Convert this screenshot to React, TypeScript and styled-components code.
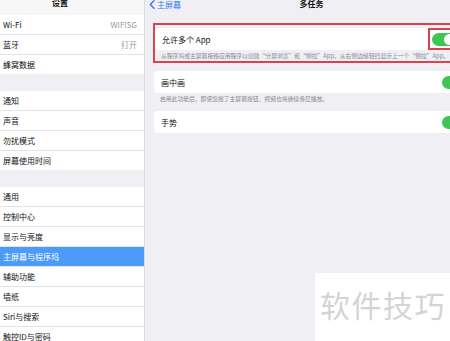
import styled, { createGlobalStyle } from "styled-components";

const GlobalStyle = createGlobalStyle`
  html, body {
    margin: 0;
    padding: 0;
    width: 450px;
    height: 341px;
    overflow: hidden;
    background: #efeff4;
    font-family: "Noto Sans CJK SC", "Noto Sans", sans-serif;
  }
`;

type Item = { label: string; value?: string; selected?: boolean };

const groups: Item[][] = [
  [
    { label: "Wi-Fi", value: "WIFISG" },
    { label: "蓝牙", value: "打开" },
    { label: "蜂窝数据" },
  ],
  [
    { label: "通知" },
    { label: "声音" },
    { label: "勿扰模式" },
    { label: "屏幕使用时间" },
  ],
  [
    { label: "通用" },
    { label: "控制中心" },
    { label: "显示与亮度" },
    { label: "主屏幕与程序坞", selected: true },
    { label: "辅助功能" },
    { label: "墙纸" },
    { label: "Siri与搜索" },
    { label: "触控ID与密码" },
  ],
];

const App: React.FC = () => {
  return (
    <>
      <GlobalStyle />
      <Screen>
        <Sidebar>
          <SideHeader>
            <HeaderTitle>设置</HeaderTitle>
          </SideHeader>
          {groups.map((group, gi) => (
            <Group key={gi}>
              {group.map((item) => (
                <Row key={item.label} $selected={item.selected}>
                  <span>{item.label}</span>
                  {item.value && <Value>{item.value}</Value>}
                </Row>
              ))}
            </Group>
          ))}
        </Sidebar>

        <Detail>
          <NavBar>
            <Back>
              <svg width="6" height="9" viewBox="0 0 6 9">
                <path d="M5 0.8 L1.3 4.5 L5 8.2" fill="none" stroke="#3478f6" strokeWidth="1.4" strokeLinecap="round" strokeLinejoin="round" />
              </svg>
              主屏幕
            </Back>
            <NavTitle>多任务</NavTitle>
          </NavBar>

          <Content>
            <Highlight>
              <Cell>
                <CellLabel>允许多个 App</CellLabel>
                <ToggleFrame>
                  <Toggle />
                </ToggleFrame>
              </Cell>
              <Footnote>从程序坞或主屏幕拖移应用程序以创建“分屏浏览”和“侧拉”App。从右侧边缘轻扫显示上一个“侧拉”App。</Footnote>
            </Highlight>

            <Section>
              <Cell>
                <CellLabel>画中画</CellLabel>
                <Toggle />
              </Cell>
              <Footnote>启用此功能后，即使您按了主屏幕按钮，视频也将继续叠层播放。</Footnote>
            </Section>

            <Section>
              <Cell>
                <CellLabel>手势</CellLabel>
                <Toggle />
              </Cell>
            </Section>
          </Content>

          <Watermark>软件技巧</Watermark>
        </Detail>
      </Screen>
    </>
  );
};

export default App;

const Screen = styled.div`
  display: flex;
  width: 450px;
  height: 341px;
  overflow: hidden;
`;

const Sidebar = styled.div`
  width: 144px;
  flex-shrink: 0;
  background: #efeff4;
  border-right: 1px solid #dcdce0;
  display: flex;
  flex-direction: column;
  gap: 17px;
  overflow: hidden;
`;

const SideHeader = styled.div`
  height: 15px;
  flex-shrink: 0;
  margin-bottom: -17px;
  background: #f7f7f8;
  display: flex;
  justify-content: center;
  align-items: flex-start;
  padding-right: 24px;
`;

const HeaderTitle = styled.div`
  font-size: 8px;
  font-weight: 600;
  line-height: 8px;
  margin-top: -1px;
  color: #111;
`;

const Group = styled.div`
  flex-shrink: 0;
  background: #fff;
  display: flex;
  flex-direction: column;
`;

const Row = styled.div<{ $selected?: boolean }>`
  height: 19px;
  flex-shrink: 0;
  border-bottom: 1px solid #e4e4e8;
  display: flex;
  align-items: center;
  justify-content: space-between;
  padding: 0 7px 0 3px;
  font-size: 8px;
  color: ${(p) => (p.$selected ? "#fff" : "#111")};
  background: ${(p) => (p.$selected ? "#4b9bf7" : "transparent")};

  &:last-child {
    border-bottom: none;
  }
`;

const Value = styled.span`
  color: #9a9aa0;
`;

const Detail = styled.div`
  position: relative;
  flex: 1;
  background: #efeff4;
  overflow: hidden;
`;

const NavBar = styled.div`
  position: relative;
  height: 15px;
  display: flex;
  align-items: flex-start;
  justify-content: center;
`;

const Back = styled.div`
  position: absolute;
  left: 4px;
  top: 0;
  display: flex;
  align-items: center;
  gap: 2px;
  color: #3478f6;
  font-size: 8px;
  line-height: 8px;
`;

const NavTitle = styled.div`
  font-size: 8px;
  font-weight: 600;
  line-height: 8px;
  margin-left: 28px;
  color: #111;
`;

const Content = styled.div`
  display: flex;
  flex-direction: column;
  gap: 7px;
  padding: 8px 0 0 8px;
  margin-right: -12px;
`;

const Section = styled.div`
  display: flex;
  flex-direction: column;
  margin-left: 1px;
`;

const Highlight = styled.div`
  display: flex;
  flex-direction: column;
  border: 2px solid #d9434f;
  border-right: none;
  padding-top: 3px;
  margin-bottom: 1px;
`;

const Cell = styled.div`
  height: 22px;
  background: #fff;
  border-radius: 3px;
  display: flex;
  align-items: center;
  justify-content: space-between;
  padding: 0 0 0 7px;
`;

const CellLabel = styled.span`
  font-size: 8px;
  color: #111;
`;

const ToggleFrame = styled.div`
  height: 18px;
  width: 30px;
  border: 2px solid #d9434f;
  border-right: none;
  display: flex;
  align-items: center;
  padding-left: 2px;
`;

const Toggle = styled.div`
  position: relative;
  width: 24px;
  height: 13px;
  flex-shrink: 0;
  border-radius: 7px;
  background: #3ec654;
  margin-right: -4px;

  &::after {
    content: "";
    position: absolute;
    right: 1px;
    top: 1px;
    width: 11px;
    height: 11px;
    border-radius: 50%;
    background: #fff;
  }
`;

const Footnote = styled.div`
  font-size: 5.8px;
  line-height: 11px;
  color: #8a8a8f;
  padding-left: 6px;
  white-space: nowrap;
`;

const Watermark = styled.div`
  position: absolute;
  left: 170px;
  top: 273px;
  right: 0;
  bottom: 0;
  background: #fff;
  font-size: 30px;
  color: #d4d4d6;
  padding: 9px 0 0 5px;
  letter-spacing: 1.5px;
  white-space: nowrap;
`;
